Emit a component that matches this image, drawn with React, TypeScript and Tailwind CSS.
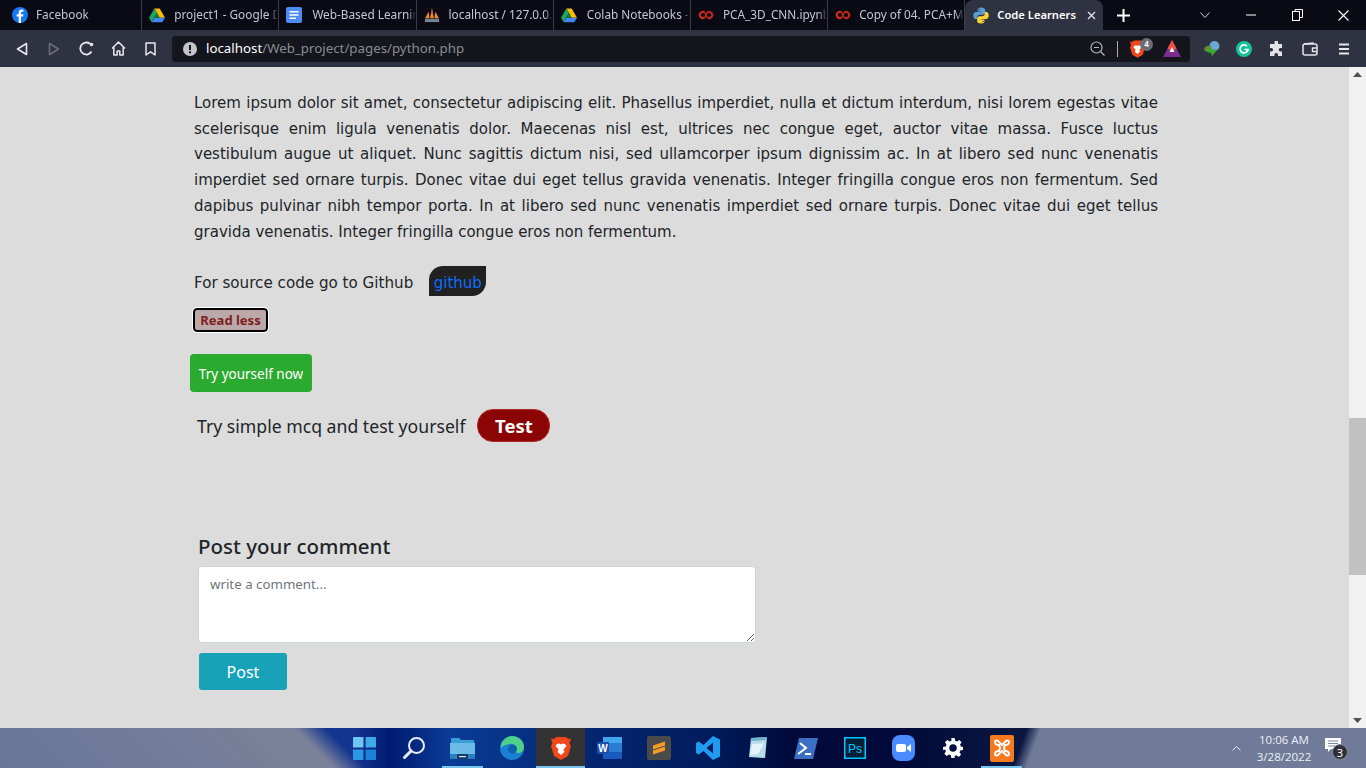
import React from "react";

const FB = () => (
  <svg width="16" height="16" viewBox="0 0 16 16"><circle cx="8" cy="8" r="8" fill="#1877f2"/><path d="M9 16V9.6h2l.4-2.3H9V6c0-.8.3-1.2 1.2-1.2h1.2V2.7c-.5-.1-1.1-.2-1.7-.2-1.8 0-3 1.1-3 3.1v1.7h-2v2.3h2V16z" fill="#fff"/></svg>
);
const Drive = () => (
  <svg width="16" height="15" viewBox="0 0 16 14"><path d="M5.3 0h5.4l5.3 9.2h-5.4z" fill="#fbbc04"/><path d="M5.3 0L0 9.2l2.7 4.6L8 4.6z" fill="#1fa463"/><path d="M2.7 13.8h10.6L16 9.2H5.4z" fill="#4285f4"/><path d="M5.4 9.2h5.2L8 4.6z" fill="#188038"/></svg>
);
const Docs = () => (
  <svg width="16" height="16" viewBox="0 0 16 16"><rect width="16" height="16" rx="2" fill="#4d8bf5"/><path d="M3.5 4h9v1.6h-9zM3.5 7.2h9v1.6h-9zM3.5 10.4h6.5V12H3.5z" fill="#fff"/></svg>
);
const Pma = () => (
  <svg width="17" height="17" viewBox="0 0 17 16"><path d="M1 11L5 4l1 7zM6.500 11L8.500 0l2 11zM11 11l1-7 4 7z" fill="#e8892b"/><path d="M1 11.500h15V15H1z" fill="#7a7f95"/><path d="M7.500 6l1-6 .8 6z" fill="#c9501d"/></svg>
);
const Colab = () => (
  <svg width="17" height="10" viewBox="0 0 17 10" fill="none"><path d="M7 2.200A3.300 3.300 0 1 0 7 7.800" stroke="#d52a1e" strokeWidth="2.200"/><path d="M10 2.200A3.300 3.300 0 1 1 10 7.800" stroke="#c8261c" strokeWidth="2.200"/><path d="M7 2.200L10 7.800M10 2.200L7 7.800" stroke="#c8261c" strokeWidth="1.600"/></svg>
);
const Py = () => (
  <svg width="17" height="17" viewBox="0 0 16 16"><path d="M7.900 0C5.500 0 4.600 1 4.600 2.300v1.600h3.500v.6H3C1.500 4.500.3 5.600.3 8c0 2.500 1.200 3.600 2.500 3.600h1.400V9.800c0-1.300 1.100-2.500 2.600-2.500h3.400c1.200 0 2.100-1 2.100-2.200V2.300C11.800 1 10.500 0 7.900 0zM6 1.300a.7.700 0 1 1 0 1.400.7.700 0 0 1 0-1.400z" fill="#5a9fd4"/><path d="M8.100 16c2.400 0 3.300-1 3.300-2.300v-1.600H7.900v-.6H13c1.500 0 2.700-1.100 2.700-3.500 0-2.500-1.200-3.600-2.500-3.600h-1.400v1.800c0 1.300-1.100 2.500-2.600 2.500H6.300c-1.200 0-2.100 1-2.100 2.200v2.800C4.200 15 5.500 16 8.100 16zm1.900-1.300a.7.700 0 1 1 0-1.400.7.700 0 0 1 0 1.400z" fill="#ffd43b"/></svg>
);

const tabs = [
  { icon: <FB />, title: "Facebook", gap: "gap-[8px]" },
  { icon: <Drive />, title: "project1 - Google Drive", gap: "gap-[9px]" },
  { icon: <Docs />, title: "Web-Based Learning", gap: "gap-[10px]" },
  { icon: <Pma />, title: "localhost / 127.0.0.1", gap: "gap-[9px]" },
  { icon: <Drive />, title: "Colab Notebooks - Google", gap: "gap-[10px]" },
  { icon: <Colab />, title: "PCA_3D_CNN.ipynb", gap: "gap-[9px]" },
  { icon: <Colab />, title: "Copy of 04. PCA+MNIST", gap: "gap-[8px]" },
];

const lines = [
  "Lorem ipsum dolor sit amet, consectetur adipiscing elit. Phasellus imperdiet, nulla et dictum interdum, nisi lorem egestas vitae",
  "scelerisque enim ligula venenatis dolor. Maecenas nisl est, ultrices nec congue eget, auctor vitae massa. Fusce luctus",
  "vestibulum augue ut aliquet. Nunc sagittis dictum nisi, sed ullamcorper ipsum dignissim ac. In at libero sed nunc venenatis",
  "imperdiet sed ornare turpis. Donec vitae dui eget tellus gravida venenatis. Integer fringilla congue eros non fermentum. Sed",
  "dapibus pulvinar nibh tempor porta. In at libero sed nunc venenatis imperdiet sed ornare turpis. Donec vitae dui eget tellus",
];

const taskIcons = [
  <svg width="23" height="23" viewBox="0 0 22 22"><path d="M0 1a1 1 0 0 1 1-1h9v10H0z" fill="#6fc6f2"/><path d="M12 0h9a1 1 0 0 1 1 1v9H12z" fill="#3da9e8"/><path d="M0 12h10v10H1a1 1 0 0 1-1-1z" fill="#2a98e4"/><path d="M12 12h10v9a1 1 0 0 1-1 1h-9z" fill="#1a82d8"/></svg>,
  <svg width="24" height="24" viewBox="0 0 24 24" fill="none" stroke="#e8eef8" strokeWidth="2"><circle cx="14.500" cy="9.500" r="7.500"/><path d="M9 15L2.500 21.500" strokeWidth="3" strokeLinecap="round"/></svg>,
  <svg width="25" height="22" viewBox="0 0 25 22"><path d="M1 2a1 1 0 0 1 1-1h7l2 2h12a1 1 0 0 1 1 1v4H1z" fill="#3c9ed8"/><path d="M0 6h25v15a1 1 0 0 1-1 1H1a1 1 0 0 1-1-1z" fill="#6dbbe9"/><path d="M0 17h25v4a1 1 0 0 1-1 1H1a1 1 0 0 1-1-1z" fill="#2a7fc0"/><rect x="7" y="17" width="11" height="5" rx="1" fill="#123c66"/><path d="M9 19h7v1.200H9z" fill="#d8e8f4"/></svg>,
  <svg width="24" height="24" viewBox="0 0 24 24"><circle cx="12" cy="12" r="12" fill="#1a7fd0"/><path d="M1 9C3 3 8 0 12 0c7 0 12 5 12 11 0 4-3 6-6 6-3 0-4-1.500-4-3 0-1 1-1.500 1-3 0-2-3-4-6-3S3 9 1 12z" fill="#4fd08a"/><circle cx="12.500" cy="13" r="4.500" fill="#0e5fb0"/></svg>,
  <svg width="20" height="23" viewBox="0 0 20 23"><path d="M5 0h10l2 2 3-.500-1.500 5L20 9l-3 10-7 4-7-4L0 9l1.500-2.500L0 1.500 3 2z" fill="#f1471d"/><path d="M6 7l2.500-.500L10 7.500l1.500-1L14 7l1.500 2-3 3.500 1 2.500L10 18l-3.500-3 1-2.500-3-3.500z" fill="#fff"/></svg>,
  <svg width="25" height="22" viewBox="0 0 25 22"><rect x="6" y="0" width="19" height="22" rx="1" fill="#2b7cd3"/><path d="M6 0h19v6H6z" fill="#41a5ee"/><path d="M6 15h19v7H7a1 1 0 0 1-1-1z" fill="#185abd"/><rect x="0" y="5" width="12" height="12" rx="1" fill="#1a4fa8"/><text x="6" y="14.500" textAnchor="middle" fontSize="10" fontWeight="700" fontFamily="Liberation Sans" fill="#fff">W</text></svg>,
  <svg width="24" height="24" viewBox="0 0 24 24"><rect width="24" height="24" rx="2" fill="#4a4a4a"/><path d="M6 9.500L18 5.500v4L6 13.500zM6 14.500l12-4v4L6 18.500z" fill="#f79a25"/></svg>,
  <svg width="24" height="24" viewBox="0 0 24 24"><path d="M17 0l7 3.400v17.200L17 24 7.500 15l-4.700 3.600L0 17V7l2.800-1.600L7.500 9zM17 6.500L10.500 12l6.500 5.500z" fill="#1f9cf0"/></svg>,
  <svg width="24" height="24" viewBox="0 0 24 24"><path d="M6 2l16-1-2 21-16-1z" fill="#b8dbe8"/><path d="M6 2l16-1v3L5.700 5z" fill="#6db2d0"/><path d="M7 8l12-.800-6 11L5 19z" fill="#e6f3f8"/></svg>,
  <svg width="24" height="21" viewBox="0 0 24 21"><path d="M5 0h19l-5 21H0z" fill="#3a6fc4"/><path d="M6 5l6 5-8 6" fill="none" stroke="#fff" strokeWidth="2"/><path d="M11 16h6" stroke="#fff" strokeWidth="2"/></svg>,
  <svg width="22" height="22" viewBox="0 0 22 22"><rect width="22" height="22" fill="#001e36"/><rect x=".750" y=".750" width="20.500" height="20.500" fill="none" stroke="#00c8ff" strokeWidth="1.500"/><text x="11" y="15.500" textAnchor="middle" fontSize="12" fontFamily="Liberation Sans" fill="#00c8ff">Ps</text></svg>,
  <svg width="23" height="26" viewBox="0 0 23 26"><rect width="23" height="26" rx="8" fill="#4a8cff"/><rect x="4" y="9" width="10" height="8" rx="2" fill="#fff"/><path d="M15 12l4-3v8l-4-3z" fill="#fff"/></svg>,
  <svg width="20" height="20" viewBox="0 0 24 24" fill="#fff" fillRule="evenodd"><path d="M10 0h4l.6 3.300 2.200.9L19.600 2.300l2.800 2.800-1.900 2.800.9 2.200L24 10.700v3.600l-3.300.6-.9 2.200 1.900 2.800-2.800 2.800-2.800-1.900-2.200.9L14 24h-4l-.6-3.300-2.200-.9-2.800 1.900-2.800-2.800 1.900-2.800-.9-2.200L0 14.300v-3.600l3.300-.6.9-2.200-1.900-2.800 2.800-2.800 2.800 1.900 2.200-.9zM12 7.500a4.500 4.500 0 1 0 0 9 4.500 4.500 0 0 0 0-9z"/></svg>,
  <svg width="24" height="27" viewBox="0 0 24 27"><rect width="24" height="27" rx="2" fill="#f5791f"/><path d="M5 7c0-2 3-2 4 0l3 3 3-3c1-2 4-2 4 0s-2 3-4 3l-1 3 1 3c2 0 4 1 4 3s-3 2-4 0l-3-3-3 3c-1 2-4 2-4 0s2-3 4-3l1-3-1-3c-2 0-4-1-4-3z" fill="none" stroke="#fff" strokeWidth="2"/></svg>,
];

const iconBtn = "flex w-[32px] items-center justify-center";

export default function App() {
  return (
    <div className="flex h-screen w-full flex-col overflow-hidden bg-[#dcdcdc] font-['Noto_Sans',sans-serif]">
      {/* tab strip */}
      <div className="flex h-[30px] shrink-0 items-stretch bg-[#0a0a14] pl-[5px]">
        {tabs.map((t) => (
          <div key={t.title} className={`flex w-[137.200px] items-center overflow-hidden border-r border-[#3a3c48] pl-[7px] ${t.gap}`}>
            <span className="flex w-[16px] shrink-0 justify-center">{t.icon}</span>
            <span className="min-w-0 overflow-hidden pr-[2px] text-[11.800px] whitespace-nowrap text-[#c5c7cf] [mask-image:linear-gradient(90deg,#000_92%,transparent)]">{t.title}</span>
          </div>
        ))}
        <div className="flex w-[138px] items-center rounded-t-[8px] bg-[#2f3241] pl-[8px]">
          <span className="flex w-[16px] shrink-0 justify-center"><Py /></span>
          <span className="ml-[8px] text-[11.200px] font-semibold whitespace-nowrap text-white">Code Learners</span>
          <svg className="ml-[11px]" width="9" height="9" viewBox="0 0 9 9" stroke="#e4e4e8" strokeWidth="1.300"><path d="M1 1l7 7M8 1L1 8" /></svg>
        </div>
        <div className="flex w-[40px] items-center justify-center">
          <svg width="13" height="13" viewBox="0 0 13 13" stroke="#fff" strokeWidth="2"><path d="M6.500 0v13M0 6.500h13" /></svg>
        </div>
        <div className="ml-auto flex items-center text-[#e8e8ec]">
          <div className="flex w-[46px] justify-center"><svg width="10" height="6" viewBox="0 0 10 6" fill="none" stroke="#c8c8cc"><path d="M.500.500L5 5.500 9.500.500" /></svg></div>
          <div className="flex w-[46px] justify-center"><svg width="10" height="2" viewBox="0 0 10 2" stroke="#fff"><path d="M0 1h10" /></svg></div>
          <div className="flex w-[46px] justify-center"><svg width="11" height="12" viewBox="0 0 11 12" fill="none" stroke="#fff"><rect x=".500" y="2.500" width="7" height="9" /><path d="M3 2.500V.500h7.500v8H7.500" /></svg></div>
          <div className="flex w-[46px] justify-center"><svg width="11" height="11" viewBox="0 0 11 11" stroke="#fff" strokeWidth="1.100"><path d="M.500.500l10 10M10.500.500l-10 10" /></svg></div>
        </div>
      </div>

      {/* toolbar */}
      <div className="flex h-[37px] shrink-0 items-center bg-[#2f3241] pl-[6px]">
        <div className={iconBtn}><svg width="12" height="14" viewBox="0 0 12 14" fill="none" stroke="#e8e8ec" strokeWidth="1.600" strokeLinejoin="round"><path d="M10.500 1.500v11L1.500 7z" /></svg></div>
        <div className={iconBtn}><svg width="12" height="14" viewBox="0 0 12 14" fill="none" stroke="#6a6c78" strokeWidth="1.600" strokeLinejoin="round"><path d="M1.500 1.500v11l9-5.500z" /></svg></div>
        <div className={iconBtn}><svg width="15" height="15" viewBox="0 0 15 15" fill="none" stroke="#e8e8ec" strokeWidth="1.800"><path d="M12.500 10.500A6 6 0 1 1 11 2.800" /><circle cx="12.500" cy="3.500" r="1.800" fill="#e8e8ec" stroke="none" /></svg></div>
        <div className={iconBtn}><svg width="15" height="15" viewBox="0 0 15 15" fill="none" stroke="#e8e8ec" strokeWidth="1.500" strokeLinejoin="round"><path d="M1 7.500L7.500 1 14 7.500M2.800 6v8h3.400v-4h2.600v4h3.400V6" /></svg></div>
        <div className={iconBtn}><svg width="11" height="14" viewBox="0 0 11 14" fill="none" stroke="#e8e8ec" strokeWidth="1.500" strokeLinejoin="round"><path d="M1 1h9v12L5.500 9.800 1 13z" /></svg></div>

        <div className="ml-[6px] flex h-[26px] w-[1018px] items-center rounded-[4px] bg-[#14151d] pl-[11px] text-[13.300px]">
          <svg width="14" height="14" viewBox="0 0 14 14"><circle cx="7" cy="7" r="7" fill="#c4c4c8" /><rect x="6" y="3" width="2" height="5" fill="#14151d" /><rect x="6" y="9.300" width="2" height="2" fill="#14151d" /></svg>
          <span className="ml-[9px] text-white">localhost</span>
          <span className="text-[#8a8c94]">/Web_project/pages/python.php</span>
          <div className="ml-auto flex items-center pr-[9px]">
            <svg width="15" height="15" viewBox="0 0 15 15" fill="none" stroke="#b8b8bc" strokeWidth="1.200"><circle cx="6.500" cy="6.500" r="5.500" /><path d="M4 6.500h5M10.500 10.500L14.500 14.500" /></svg>
            <span className="mx-[12px] h-[16px] w-px bg-[#a8aab0]" />
            <span className="relative flex h-[18px] w-[20px] items-center">
              <svg width="15" height="18" viewBox="0 0 20 23"><path d="M5 0h10l2 2 3-.500-1.500 5L20 9l-3 10-7 4-7-4L0 9l1.500-2.500L0 1.500 3 2z" fill="#f1471d" /><path d="M6 7l2.500-.500L10 7.500l1.500-1L14 7l1.500 2-3 3.500 1 2.500L10 18l-3.500-3 1-2.500-3-3.500z" fill="#fff" /></svg>
              <span className="absolute top-[-2px] left-[10px] flex h-[13px] w-[13px] items-center justify-center rounded-full bg-[#6a6c78] text-[8px] leading-none font-bold text-white">4</span>
            </span>
            <svg className="ml-[13px]" width="18" height="17" viewBox="0 0 18 17"><path d="M9 0l9 17H0z" fill="#7b2c8f" /><path d="M9 0l4.500 8.500-4.500 3-4.500-3z" fill="#f0503c" /><path d="M9 7l2.500 5h-5z" fill="#fff" /></svg>
          </div>
        </div>

        <div className="ml-[6px] flex items-center">
          <div className={iconBtn}><svg width="17" height="15" viewBox="0 0 17 15"><circle cx="10.500" cy="5" r="5" fill="#6aa6d8" /><path d="M0 8c1-3 4-4 7-3l1 4 6-1-6 7-1-3c-3-1-6-1-7-4z" fill="#3fa52b" /><path d="M1 9c1-2 3-2.500 5-2.500" stroke="#e0483c" fill="none" /></svg></div>
          <div className={iconBtn}><svg width="16" height="16" viewBox="0 0 16 16" fill="none"><circle cx="8" cy="8" r="8" fill="#15c39a" /><path d="M11 5.200A4 4 0 1 0 12 8.500H8.500" stroke="#fff" strokeWidth="1.700" /></svg></div>
          <div className={iconBtn}><svg width="15" height="15" viewBox="0 0 15 15" fill="#e4e4e8"><path d="M5.500 1.500a1.800 1.800 0 0 1 3.600 0V3H13v4h-1.500a1.800 1.800 0 0 0 0 3.600H13V15H9v-1.300a1.800 1.800 0 0 0-3.600 0V15H1v-4.400h1.300a1.800 1.800 0 0 0 0-3.600H1V3h4.500z" /></svg></div>
          <div className={`${iconBtn} ml-[2px]`}><svg width="16" height="14" viewBox="0 0 16 14" fill="none" stroke="#e4e4e8" strokeWidth="1.500"><rect x="1" y="2" width="14" height="11" rx="2" /><path d="M2 2l9-1v1" /><path d="M15 6h-4.500v3.500H15" /></svg></div>
          <div className={`${iconBtn} ml-[2px]`}><svg width="10" height="12" viewBox="0 0 10 12" stroke="#e4e4e8" strokeWidth="2"><path d="M0 1.500h10M0 6h10M0 10.500h10" /></svg></div>
        </div>
      </div>

      {/* page */}
      <div className="flex min-h-0 flex-1">
        <main className="min-w-0 flex-1 overflow-hidden text-[#212529]">
          <div className="ml-[194px] w-[964px] pt-[24px] font-['DejaVu_Sans',sans-serif] text-[15px] leading-[25.700px]">
            {lines.map((l) => (
              <div key={l} className="text-justify [text-align-last:justify]">{l}</div>
            ))}
            <div>gravida venenatis. Integer fringilla congue eros non fermentum.</div>
            <div className="mt-[21px] flex h-[30px] items-center">
              <span className="pt-[6px] text-[15.150px]">For source code go to Github</span>
              <a className="ml-[16px] flex h-[30px] w-[57px] items-center justify-center rounded-tl-[14px] rounded-br-[14px] bg-[#212121] pt-[5px] text-[#0d6efd]">github</a>
            </div>
          </div>
          <button className="mt-[12px] ml-[193px] flex h-[24px] w-[75px] items-center justify-center rounded-[4px] border-2 border-black bg-[#bba9a9] pt-[1px] text-[13px] font-bold text-[#7f1d1d] outline outline-1 outline-white">Read less</button>
          <button className="mt-[22px] ml-[190px] block h-[38px] w-[122px] rounded-[4px] bg-[#2aaa2e] pt-[1px] text-[13.500px] text-white">Try yourself now</button>
          <div className="mt-[17px] ml-[197px] flex h-[33px] items-center text-[17.650px]">
            <span className="pt-[2px]">Try simple mcq and test yourself</span>
            <button className="ml-[12px] h-[33px] w-[73px] rounded-[16px] border border-[#b3262a] bg-[#8b0505] text-[18.500px] font-bold text-white">Test</button>
          </div>
          <h2 className="mt-[88px] ml-[198px] text-[20.500px] leading-[32px] font-medium">Post your comment</h2>
          <textarea
            placeholder="write a comment..."
            className="mt-[4px] ml-[198px] block h-[77px] w-[558px] rounded-[4px] border border-[#ced4da] bg-white px-[11px] py-[8px] text-[13.300px] placeholder:text-[#6c757d]"
          />
          <button className="mt-[10px] ml-[199px] block h-[37px] w-[88px] rounded-[3px] bg-[#17a2b8] text-[16px] text-white">Post</button>
        </main>

        {/* scrollbar */}
        <div className="flex w-[17px] shrink-0 flex-col items-center bg-[#f1f1f1]">
          <svg className="mt-[5px]" width="9" height="5" viewBox="0 0 9 5"><path d="M4.500 0L9 5H0z" fill="#505050" /></svg>
          <div className="mt-[341px] h-[157px] w-full bg-[#c1c1c1]" />
          <svg className="mt-auto mb-[5px]" width="9" height="5" viewBox="0 0 9 5"><path d="M4.500 5L9 0H0z" fill="#505050" /></svg>
        </div>
      </div>

      {/* taskbar */}
      <div className="flex h-[40px] shrink-0 items-center bg-[linear-gradient(45deg,#687699_0%,#7b8199_23.800%,transparent_26%),linear-gradient(110deg,transparent_74.400%,#6f7b99_75.400%),linear-gradient(90deg,#0e2f8c_0%,#14358f_26%,#001a70_28.500%,#0a3c96_33%,#04246e_44%,#021c5c_52%,#000a3a_58%,#000a3a_66%,#0a1640_74%)] pl-[340px]">
        {taskIcons.map((ic, i) => (
          <div key={i} className={`relative flex h-[40px] w-[49px] items-center justify-center ${i === 4 ? "bg-[#333333]" : ""}`}>
            {ic}
            {(i === 2 || i === 4 || i === 13) && (
              <span className={`absolute bottom-0 h-[2px] bg-[#7cc4f0] ${i === 4 ? "inset-x-0" : "inset-x-[4px]"}`} />
            )}
          </div>
        ))}
        <div className="ml-auto flex items-center">
          <svg width="9" height="5" viewBox="0 0 9 5" fill="none" stroke="#e8e8ee"><path d="M.500 4.500L4.500.500l4 4" /></svg>
          <div className="ml-[9px] w-[68px] text-center font-['Open_Sans',sans-serif] text-[11.500px] leading-[17px] text-[#eef0f5]">
            <div>10:06 AM</div>
            <div>3/28/2022</div>
          </div>
          <div className="relative mr-[25px] ml-[7px] h-[24px] w-[16px]">
            <svg className="mt-[2px]" width="16" height="15" viewBox="0 0 16 15"><path d="M0 0h16v11H6l-3 3v-3H0z" fill="#fff" /><path d="M3 3h10M3 5.500h10M3 8h10" stroke="#7c88a4" /></svg>
            <span className="absolute top-[8px] left-[7px] flex h-[16px] w-[16px] items-center justify-center rounded-full border border-[#808a9c] bg-[#2f3038] text-[11px] leading-none text-white">3</span>
          </div>
        </div>
      </div>
    </div>
  );
}
